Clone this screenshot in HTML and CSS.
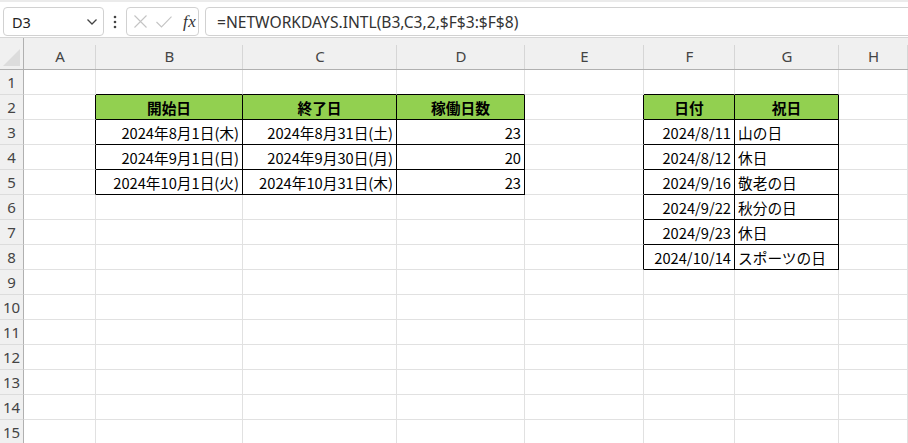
FILE: index.html
```html
<!DOCTYPE html>
<html lang="ja">
<head>
    <meta charset="UTF-8">
    <meta name="viewport" content="width=device-width, initial-scale=1.0">
    <title>稼働日数</title>
    <link rel="stylesheet" href="styles.css">
</head>
<body>
    <div class="toolbar">
        <div class="name-box">
            <span>D3</span>
            <svg class="chevron" width="12" height="8" viewBox="0 0 12 8"><path d="M1.5 1.5 L6 6 L10.5 1.5" fill="none" stroke="#444" stroke-width="1.3"/></svg>
        </div>
        <svg class="more" width="4" height="14" viewBox="0 0 4 14"><circle cx="2" cy="2" r="1.3" fill="#444"/><circle cx="2" cy="7" r="1.3" fill="#444"/><circle cx="2" cy="12" r="1.3" fill="#444"/></svg>
        <div class="fx-box">
            <svg width="13" height="13" viewBox="0 0 13 13"><path d="M0.5 0.5 L12.5 12.5 M12.5 0.5 L0.5 12.5" stroke="#c4c4c4" stroke-width="1.1"/></svg>
            <svg width="16" height="12" viewBox="0 0 16 12"><path d="M0.5 6 L5.5 11 L15.5 0.7" fill="none" stroke="#c4c4c4" stroke-width="1.1"/></svg>
            <span class="fx">fx</span>
        </div>
        <div class="formula">=NETWORKDAYS.INTL(B3,C3,2,$F$3:$F$8)</div>
    </div>

    <div class="sheet">
        <div class="row head">
            <div class="corner"><div class="tri"></div></div>
            <div class="col">A</div>
            <div class="col">B</div>
            <div class="col">C</div>
            <div class="col">D</div>
            <div class="col">E</div>
            <div class="col">F</div>
            <div class="col">G</div>
            <div class="col">H</div>
        </div>
        <div class="row">
            <div class="num">1</div>
            <div class="c"></div><div class="c kb"></div><div class="c kb"></div><div class="c kb"></div>
            <div class="c"></div><div class="c kb"></div><div class="c kb"></div><div class="c"></div>
        </div>
        <div class="row">
            <div class="num">2</div>
            <div class="c kr"></div>
            <div class="c kr kb th">開始日</div>
            <div class="c kr kb th">終了日</div>
            <div class="c kr kb th">稼働日数</div>
            <div class="c kr"></div>
            <div class="c kr kb th">日付</div>
            <div class="c kr kb th">祝日</div>
            <div class="c"></div>
        </div>
        <div class="row">
            <div class="num">3</div>
            <div class="c kr"></div>
            <div class="c kr kb r">2024年8月1日(木)</div>
            <div class="c kr kb r">2024年8月31日(土)</div>
            <div class="c kr kb r">23</div>
            <div class="c kr"></div>
            <div class="c kr kb r">2024/8/11</div>
            <div class="c kr kb">山の日</div>
            <div class="c"></div>
        </div>
        <div class="row">
            <div class="num">4</div>
            <div class="c kr"></div>
            <div class="c kr kb r">2024年9月1日(日)</div>
            <div class="c kr kb r">2024年9月30日(月)</div>
            <div class="c kr kb r">20</div>
            <div class="c kr"></div>
            <div class="c kr kb r">2024/8/12</div>
            <div class="c kr kb">休日</div>
            <div class="c"></div>
        </div>
        <div class="row">
            <div class="num">5</div>
            <div class="c kr"></div>
            <div class="c kr kb r">2024年10月1日(火)</div>
            <div class="c kr kb r">2024年10月31日(木)</div>
            <div class="c kr kb r">23</div>
            <div class="c kr"></div>
            <div class="c kr kb r">2024/9/16</div>
            <div class="c kr kb">敬老の日</div>
            <div class="c"></div>
        </div>
        <div class="row">
            <div class="num">6</div>
            <div class="c"></div><div class="c"></div><div class="c"></div><div class="c"></div>
            <div class="c kr"></div>
            <div class="c kr kb r">2024/9/22</div>
            <div class="c kr kb">秋分の日</div>
            <div class="c"></div>
        </div>
        <div class="row">
            <div class="num">7</div>
            <div class="c"></div><div class="c"></div><div class="c"></div><div class="c"></div>
            <div class="c kr"></div>
            <div class="c kr kb r">2024/9/23</div>
            <div class="c kr kb">休日</div>
            <div class="c"></div>
        </div>
        <div class="row">
            <div class="num">8</div>
            <div class="c"></div><div class="c"></div><div class="c"></div><div class="c"></div>
            <div class="c kr"></div>
            <div class="c kr kb r">2024/10/14</div>
            <div class="c kr kb">スポーツの日</div>
            <div class="c"></div>
        </div>
        <div class="row"><div class="num">9</div><div class="c"></div><div class="c"></div><div class="c"></div><div class="c"></div><div class="c"></div><div class="c"></div><div class="c"></div><div class="c"></div></div>
        <div class="row"><div class="num">10</div><div class="c"></div><div class="c"></div><div class="c"></div><div class="c"></div><div class="c"></div><div class="c"></div><div class="c"></div><div class="c"></div></div>
        <div class="row"><div class="num">11</div><div class="c"></div><div class="c"></div><div class="c"></div><div class="c"></div><div class="c"></div><div class="c"></div><div class="c"></div><div class="c"></div></div>
        <div class="row"><div class="num">12</div><div class="c"></div><div class="c"></div><div class="c"></div><div class="c"></div><div class="c"></div><div class="c"></div><div class="c"></div><div class="c"></div></div>
        <div class="row"><div class="num">13</div><div class="c"></div><div class="c"></div><div class="c"></div><div class="c"></div><div class="c"></div><div class="c"></div><div class="c"></div><div class="c"></div></div>
        <div class="row"><div class="num">14</div><div class="c"></div><div class="c"></div><div class="c"></div><div class="c"></div><div class="c"></div><div class="c"></div><div class="c"></div><div class="c"></div></div>
        <div class="row"><div class="num">15</div><div class="c"></div><div class="c"></div><div class="c"></div><div class="c"></div><div class="c"></div><div class="c"></div><div class="c"></div><div class="c"></div></div>
    </div>
</body>
</html>
```

FILE: styles.css
```css
html, body {
    margin: 0;
    padding: 0;
    height: 100%;
    overflow: hidden;
    background-color: #ffffff;
}

body {
    font-family: "Noto Sans CJK JP", "Noto Sans", sans-serif;
    color: #000000;
}

/* formula bar */
.toolbar {
    height: 37px;
    box-sizing: border-box;
    border-top: 2px solid #ebebeb;
    padding: 5px 0 0 3px;
    display: flex;
    align-items: flex-start;
    overflow: hidden;
}

.name-box {
    flex: none;
    width: 101px;
    height: 29px;
    box-sizing: border-box;
    border: 1px solid #d1d1d1;
    border-radius: 4px;
    display: flex;
    align-items: center;
    justify-content: space-between;
    padding: 0 5px 0 8px;
    font-family: "Noto Sans", sans-serif;
    font-size: 14.5px;
    color: #222;
}

.chevron {
    margin-top: 1px;
}

.more {
    flex: none;
    margin: 8px 9px 0 9px;
}

.fx-box {
    flex: none;
    width: 73px;
    height: 29px;
    box-sizing: border-box;
    border: 1px solid #d1d1d1;
    border-radius: 4px;
    display: flex;
    align-items: center;
    padding: 0 0 0 7px;
    gap: 9px;
}

.fx {
    font-family: "Liberation Serif", serif;
    font-style: italic;
    font-size: 17px;
    color: #333;
    margin-left: 2px;
    letter-spacing: 0.5px;
}

.formula {
    flex: none;
    width: 720px;
    height: 29px;
    box-sizing: border-box;
    margin-left: 6px;
    border: 1px solid #d1d1d1;
    border-radius: 4px;
    padding: 0 0 0 11px;
    display: flex;
    align-items: center;
    font-family: "Noto Sans", sans-serif;
    font-size: 15.6px;
    color: #333;
}

/* sheet grid */
.sheet {
    border-top: 1px solid #d6d6d6;
}

.row {
    display: grid;
    grid-template-columns: 24px 72px 147px 154px 128px 119px 91px 104px 1fr;
    height: 25px;
}

.row.head {
    height: 32px;
    box-sizing: border-box;
    background-color: #f0f0f0;
    border-bottom: 1px solid #b0b0b0;
}

.corner {
    border-right: 1px solid #b0b0b0;
    position: relative;
}

.tri {
    position: absolute;
    right: 3px;
    bottom: 3px;
    width: 0;
    height: 0;
    border-left: 17px solid transparent;
    border-bottom: 17px solid #dcdcdc;
}

.col {
    display: flex;
    align-items: center;
    justify-content: center;
    padding-top: 5px;
    font-family: "Noto Sans", sans-serif;
    font-size: 15px;
    color: #444;
    background: linear-gradient(#d6d6d6, #d6d6d6) right bottom / 1px 24px no-repeat;
}

.num {
    background-color: #f0f0f0;
    border-right: 1px solid #b0b0b0;
    border-bottom: 1px solid #dcdcdc;
    box-sizing: border-box;
    display: flex;
    align-items: center;
    justify-content: center;
    font-family: "Noto Sans", sans-serif;
    font-size: 15px;
    color: #444;
    white-space: nowrap;
    overflow: visible;
}

.c {
    box-sizing: border-box;
    border-right: 1px solid #e1e1e1;
    border-bottom: 1px solid #e1e1e1;
    display: flex;
    align-items: center;
    padding: 1px 3px 0 3px;
    font-size: 14.7px;
    white-space: nowrap;
}

.c.r {
    justify-content: flex-end;
}

.c.th {
    justify-content: center;
    background-color: #92d050;
    font-weight: bold;
}

/* black cell borders */
.c.kr {
    border-right-color: #000000;
}

.c.kb {
    border-bottom-color: #000000;
}
```
